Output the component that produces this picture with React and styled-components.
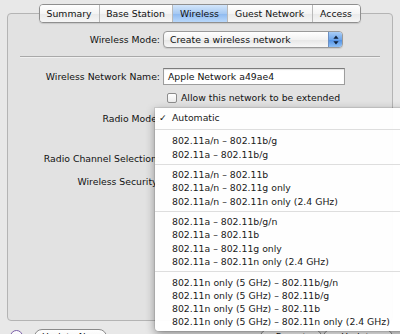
import React from 'react';
import styled, { createGlobalStyle } from 'styled-components';

const GlobalStyle = createGlobalStyle`
  html, body {
    margin: 0;
    padding: 0;
    background: #e8e8e8;
  }
  body {
    font-family: "DejaVu Sans", "Liberation Sans", sans-serif;
    font-size: 9.3px;
    color: #111;
  }
`;

const Window = styled.div`
  position: relative;
  width: 400px;
  height: 334px;
  overflow: hidden;
  background: #e8e8e8;
`;

const GroupBox = styled.div`
  margin: 13px 7px 0;
  height: 306px;
  border: 1px solid #b4b4b4;
  border-radius: 4px;
  background: #e2e2e2;
  display: flex;
  flex-direction: column;
`;

const TabBar = styled.div`
  display: flex;
  align-self: center;
  margin-top: -10px;
  margin-left: -1px;
  height: 17px;
  border: 1px solid #8f8f8f;
  border-radius: 4px;
  overflow: hidden;
  box-shadow: 0 1px 1px rgba(0, 0, 0, 0.12);
`;

const Tab = styled.div`
  display: flex;
  align-items: center;
  justify-content: center;
  width: ${p => p.$w}px;
  color: #111;
  background: ${p =>
    p.$active
      ? 'linear-gradient(#d3e6fb, #a7c9f2 50%, #8cb8ef 51%, #b9d8fb)'
      : 'linear-gradient(#ffffff, #f4f4f4 50%, #e9e9e9 51%, #f6f6f6)'};
  & + & {
    border-left: 1px solid #b9b9b9;
  }
`;

const Form = styled.div`
  display: flex;
  flex-direction: column;
  padding-top: 8px;
`;

const Row = styled.div`
  display: flex;
  align-items: center;
  height: 17px;
  margin-top: ${p => p.$mt || 0}px;
`;

const Label = styled.div`
  width: 155px;
  text-align: right;
  padding-right: 3px;
  box-sizing: border-box;
  white-space: nowrap;
`;

const Popup = styled.div`
  display: flex;
  align-items: center;
  width: 180px;
  height: 17px;
  box-sizing: border-box;
  border: 1px solid #9a9a9a;
  border-radius: 4px;
  background: linear-gradient(#ffffff, #f2f2f2 50%, #e6e6e6 51%, #f7f7f7);
  box-shadow: 0 1px 1px rgba(0, 0, 0, 0.1);
  overflow: hidden;
`;

const PopupText = styled.div`
  flex: 1;
  padding-left: 6px;
`;

const Stepper = styled.div`
  width: 13px;
  height: 100%;
  display: flex;
  align-items: center;
  justify-content: center;
  background: linear-gradient(#a9cdf6, #6fa6ea 50%, #4f8fe3 51%, #8fc0f5);
  border-left: 1px solid #6b8fc2;
`;

const TextField = styled.div`
  width: 182px;
  height: 17px;
  box-sizing: border-box;
  border: 1px solid #9d9d9d;
  border-top-color: #7c7c7c;
  background: #fff;
  box-shadow: inset 0 1px 1px rgba(0, 0, 0, 0.12);
  display: flex;
  align-items: center;
  padding-left: 4px;
`;

const Check = styled.div`
  width: 10px;
  height: 10px;
  box-sizing: border-box;
  margin-left: 159px;
  margin-right: 4px;
  border: 1px solid #8c8c8c;
  border-radius: 2px;
  background: linear-gradient(#ffffff, #ececec);
`;

const Separator = styled.div`
  height: 1px;
  margin: 8px 12px 0 12px;
  background: #a9a9a9;
  border-bottom: 1px solid #f0f0f0;
`;

const Menu = styled.div`
  position: absolute;
  left: 155px;
  top: 108px;
  width: 260px;
  padding: 3px 0 2px;
  background: rgba(255, 255, 255, 0.97);
  border-radius: 0 0 4px 4px;
  box-shadow: 0 3px 10px rgba(0, 0, 0, 0.4), 0 0 0 1px rgba(0, 0, 0, 0.08);
`;

const MenuItem = styled.div`
  position: relative;
  height: 13.3px;
  line-height: 13.3px;
  padding-left: 17px;
  white-space: nowrap;
  color: #1a1a1a;
`;

const Tick = styled.span`
  position: absolute;
  left: 4px;
`;

const MenuSep = styled.div`
  height: ${p => (p.$first ? 10 : 7.2)}px;
  display: flex;
  align-items: center;
  &::after {
    content: '';
    flex: 1;
    height: 1px;
    background: #dedede;
  }
`;

const Footer = styled.div`
  display: flex;
  align-items: flex-start;
  padding: 8px 0 0 10px;
  gap: 11px;
`;

const Help = styled.div`
  width: 11px;
  height: 11px;
  border-radius: 50%;
  border: 1px solid #7a5fa8;
  background: linear-gradient(#ffffff, #e7e2f0);
  margin-top: 1px;
`;

const Button = styled.div`
  width: ${p => p.$w}px;
  height: 16px;
  margin-left: ${p => p.$ml || 0}px;
  box-sizing: border-box;
  border: 1px solid #8a8a8a;
  border-radius: 8px;
  background: linear-gradient(#ffffff, #ededed);
  text-align: center;
  line-height: 14px;
`;

const tabs = [
  { name: 'Summary', w: 59 },
  { name: 'Base Station', w: 72 },
  { name: 'Wireless', w: 54, active: true },
  { name: 'Guest Network', w: 84 },
  { name: 'Access', w: 47 },
];

const groups = [
  ['802.11a/n – 802.11b/g', '802.11a – 802.11b/g'],
  ['802.11a/n – 802.11b', '802.11a/n – 802.11g only', '802.11a/n – 802.11n only (2.4 GHz)'],
  ['802.11a – 802.11b/g/n', '802.11a – 802.11b', '802.11a – 802.11g only', '802.11a – 802.11n only (2.4 GHz)'],
  [
    '802.11n only (5 GHz) – 802.11b/g/n',
    '802.11n only (5 GHz) – 802.11b/g',
    '802.11n only (5 GHz) – 802.11b',
    '802.11n only (5 GHz) – 802.11n only (2.4 GHz)',
  ],
];

const StepArrows = () => (
  <svg width="6" height="10" viewBox="0 0 6 10">
    <path d="M3 0.5 L5.6 3.8 H0.4 Z" fill="#10213a" />
    <path d="M3 9.5 L5.6 6.2 H0.4 Z" fill="#10213a" />
  </svg>
);

export default function App() {
  return (
    <Window>
      <GlobalStyle />
      <GroupBox>
        <TabBar>
          {tabs.map(t => (
            <Tab key={t.name} $w={t.w} $active={t.active}>{t.name}</Tab>
          ))}
        </TabBar>
        <Form>
          <Row>
            <Label>Wireless Mode:</Label>
            <Popup>
              <PopupText>Create a wireless network</PopupText>
              <Stepper><StepArrows /></Stepper>
            </Popup>
          </Row>
          <Separator />
          <Row $mt={10}>
            <Label>Wireless Network Name:</Label>
            <TextField>Apple Network a49ae4</TextField>
          </Row>
          <Row $mt={4}>
            <Check />
            <div>Allow this network to be extended</div>
          </Row>
          <Row $mt={4}>
            <Label>Radio Mode:</Label>
          </Row>
          <Row $mt={23}>
            <Label>Radio Channel Selection:</Label>
          </Row>
          <Row $mt={6}>
            <Label>Wireless Security:</Label>
          </Row>
        </Form>
      </GroupBox>
      <Footer>
        <Help />
        <Button $w={73}>Update Now</Button>
        <Button $w={62} $ml={142}>Revert</Button>
        <Button $w={70} $ml={-10}>Update</Button>
      </Footer>
      <Menu>
        <MenuItem><Tick>✓</Tick>Automatic</MenuItem>
        {groups.map((g, i) => (
          <React.Fragment key={i}>
            <MenuSep $first={i === 0} />
            {g.map(item => <MenuItem key={item}>{item}</MenuItem>)}
          </React.Fragment>
        ))}
      </Menu>
    </Window>
  );
}
